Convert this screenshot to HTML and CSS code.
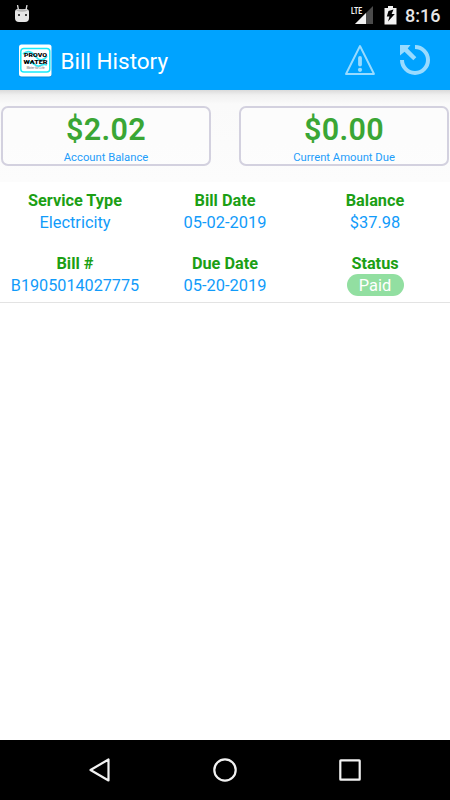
FILE: index.html
```
<!DOCTYPE html>
<html lang="en">
<head>
<meta charset="utf-8">
<title>Bill History</title>
<link rel="stylesheet" href="styles.css">
</head>
<body>
<div class="screen">
  <div class="statusbar">
    <svg class="bot" width="16" height="20" viewBox="0 0 16 20"><path d="M3.500 0l1 5M13 0l-1 5" stroke="#ddd" stroke-width="1.300"/><path d="M1 7Q1 4 4 4h8q3 0 3 3v6q0 4-4 4H5q-4 0-4-4z" fill="#e5e5e5"/><path d="M2 5.500Q8 2.500 14 5.500 8 8 2 5.500z" fill="#b5b5b5"/><path d="M4 9h2v2H4zM11 9h2v2h-2z" fill="#444"/></svg>
    <div class="signal">
      <svg width="24" height="20" viewBox="0 0 24 20"><path d="M22 1v18H4z" fill="#4b4b4b"/><path d="M15 8v11H4z" fill="#f2f2f2"/></svg>
      <span class="lte">LTE</span>
    </div>
    <svg class="battery" width="13" height="19" viewBox="0 0 13 19"><path d="M4 0h5v2h3.500v16.500H.5V2H4z" fill="#f2f2f2"/><path d="M9.500 3.500L7.600 8h3.200L4 15.500l1.500-5H2.800L4.500 5z" fill="#000"/></svg>
    <span class="clock">8:16</span>
  </div>
  <header class="appbar">
    <svg class="logo" width="34" height="34" viewBox="0 0 34 34"><rect x="1" y="1.500" width="32.500" height="32" rx="2.500" fill="#0872b0" opacity=".45"/><rect x="1" y=".5" width="32.500" height="32" rx="2.500" fill="#fff"/><rect x="2.800" y="4.500" width="29" height="23.500" rx="3" fill="#fff" stroke="#18eafa" stroke-width="1.500"/><path d="M5 10c6-5 10-1 13 3s8 4 11-1M9 18c5-2 8 5 12 4s4-3 8-1" fill="none" stroke="#39e7f3" stroke-width="1.800"/><text class="logo-name" x="17.500" y="12.800" textLength="23" lengthAdjust="spacingAndGlyphs">PROVO</text><text class="logo-name" x="17.500" y="19.500" textLength="24" lengthAdjust="spacingAndGlyphs">WATER</text><text class="logo-tag" x="17.500" y="24.500" textLength="18" lengthAdjust="spacingAndGlyphs">Water for Life</text></svg>
    <h1 class="title">Bill History</h1>
    <svg class="warning" width="32" height="32" viewBox="0 0 32 32"><path d="M16 2L30 30H2z" fill="none" stroke="#99dbff" stroke-width="1.900" stroke-linejoin="round"/><path d="M16 14v6.500" stroke="#99dbff" stroke-width="3.800" stroke-linecap="round"/><circle cx="16" cy="25.800" r="2.100" fill="#99dbff"/></svg>
    <svg class="refresh" width="32" height="32" viewBox="0 0 32 32"><path d="M16 3A13 13 0 1 1 3 16" fill="none" stroke="#99dbff" stroke-width="4"/><path d="M1 1h10.500L8.700 4.500l8.600 8.800-3 3L5.500 7.700 1 11.500z" fill="#99dbff"/></svg>
  </header>
  <section class="summary">
    <div class="card"><strong class="amount">$2.02</strong><span class="caption">Account Balance</span></div>
    <div class="card"><strong class="amount">$0.00</strong><span class="caption">Current Amount Due</span></div>
  </section>
  <section class="bill">
    <div class="field"><b>Service Type</b><span>Electricity</span></div>
    <div class="field"><b>Bill Date</b><span>05-02-2019</span></div>
    <div class="field"><b>Balance</b><span>$37.98</span></div>
    <div class="field"><b>Bill #</b><span class="number">B1905014027775</span></div>
    <div class="field"><b>Due Date</b><span>05-20-2019</span></div>
    <div class="field"><b>Status</b><span class="paid">Paid</span></div>
  </section>
  <nav class="navbar">
    <svg width="26" height="26" viewBox="0 0 26 26"><path d="M21.500 2.500v21L3.500 13z"/></svg>
    <svg width="26" height="26" viewBox="0 0 26 26"><circle cx="13" cy="13" r="10.700"/></svg>
    <svg width="26" height="26" viewBox="0 0 26 26"><rect x="3.300" y="3.300" width="19.400" height="19.400" rx=".5"/></svg>
  </nav>
</div>
</body>
</html>
```

FILE: styles.css
```
* { box-sizing: border-box; }
body { margin: 0; background: #fff; font-family: Roboto, sans-serif; }
svg { display: block; flex: none; }
.screen { width: 450px; height: 800px; display: flex; flex-direction: column; overflow: hidden; }
.statusbar { height: 30px; flex: none; background: #000; display: flex; align-items: flex-start; padding: 5px 10px 0 14px; }
.signal { position: relative; margin-left: auto; }
.lte { position: absolute; left: 2px; top: 0; font-size: 9.5px; line-height: 11px; font-weight: 700; color: #f2f2f2; transform: scaleX(.72); transform-origin: left; }
.signal svg { margin-left: 2px; }
.battery { margin: 1px 0 0 9px; }
.clock { margin-left: 8px; width: 35px; font-size: 18px; line-height: 21px; font-weight: 500; color: #e6e6e6; }
.appbar { height: 60px; flex: none; background: #00a3ff; display: flex; align-items: center; padding: 0 19px 0 18px; }
.logo { margin-top: 1px; }
.logo-name { font: 900 6px Roboto, sans-serif; text-anchor: middle; fill: #000; }
.logo-tag { font: italic 3.5px Roboto, sans-serif; text-anchor: middle; fill: #666; }
.title { margin: 2px 0 0 8.5px; font-size: 22.5px; line-height: 28px; font-weight: 400; color: #fff; }
.warning { margin-left: auto; }
.refresh { margin-left: 23px; }
.summary { height: 92px; flex: none; padding: 16px 1px 0; display: flex; justify-content: space-between; background: linear-gradient(#dadada, #f0f0f0 5px, #fafafa 14px, #fcfcfc); }
.card { width: 210px; height: 60px; border: 2px solid #d3d1df; border-radius: 7px; display: flex; flex-direction: column; align-items: center; background: rgba(255, 255, 255, .35); }
.amount { margin-top: 3px; font-size: 30.5px; line-height: 38px; font-weight: 600; color: #3aa635; letter-spacing: .3px; }
.caption { font-size: 11.25px; line-height: 14px; margin-top: 2px; color: #1e9dfa; }
.bill { height: 121px; flex: none; border-bottom: 1px solid #e3e3e3; display: grid; grid-template-columns: repeat(3, 150px); grid-auto-rows: 63px; padding-top: 8px; }
.field { display: flex; flex-direction: column; align-items: center; font-size: 16.4px; line-height: 22px; color: #119bfa; }
.field b { font-size: 16.3px; font-weight: 700; color: #1c9f15; }
.field .number { font-size: 16.2px; }
.field .paid { width: 57px; height: 22px; margin-top: -1px; border-radius: 11px; background: #92dfa1; color: #fff; text-align: center; line-height: 24px; }
.navbar { height: 60px; flex: none; margin-top: auto; background: #000; display: flex; justify-content: center; align-items: center; gap: 99px; }
.navbar svg { fill: none; stroke: #f2f2f2; stroke-width: 2.2; stroke-linejoin: round; }
```
